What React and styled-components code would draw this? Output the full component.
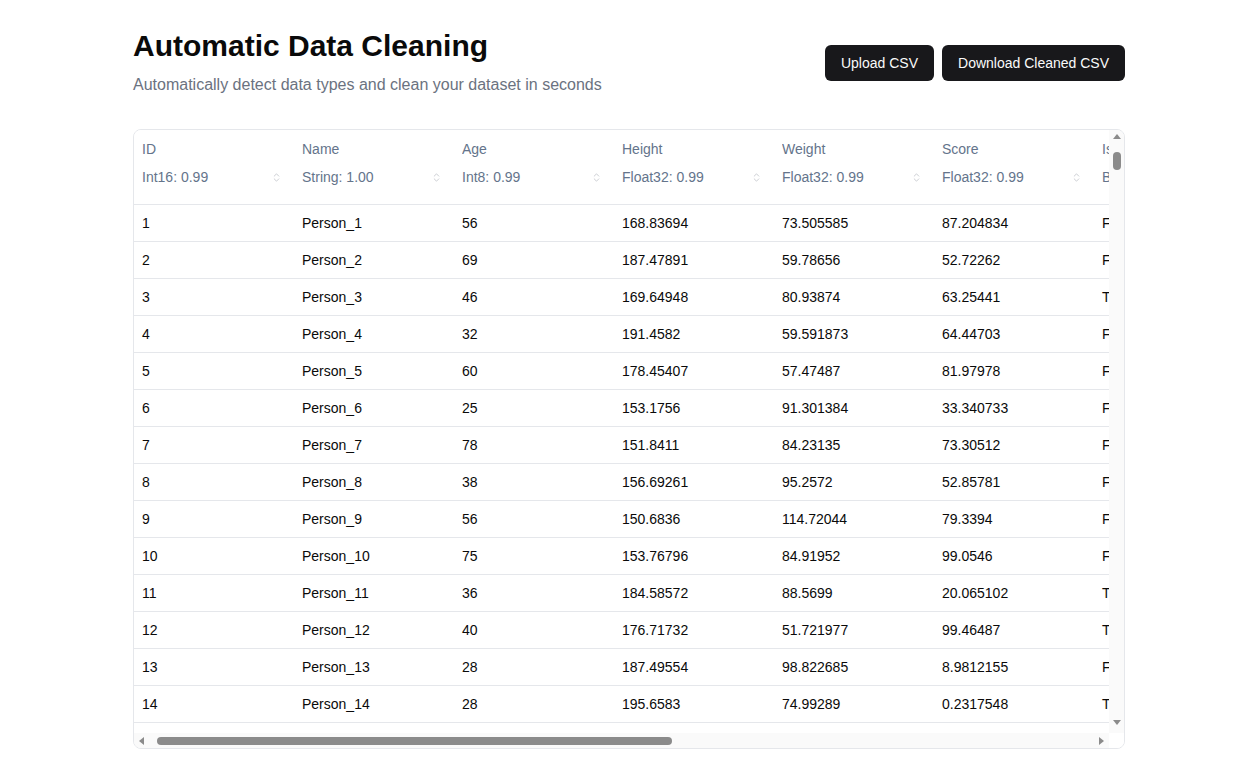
import React from "react";
import styled, { createGlobalStyle, css } from "styled-components";
import { ChevronsUpDown } from "lucide-react";

const GlobalStyle = createGlobalStyle`
  *, *::before, *::after {
    box-sizing: border-box;
  }
  body {
    margin: 0;
    background: #ffffff;
    font-family: "Liberation Sans", Arial, sans-serif;
    color: #0a0a0a;
  }
`;

const Page = styled.main`
  max-width: 992px;
  margin: 0 auto;
  padding-top: 28px;
`;

const Header = styled.header`
  display: flex;
  align-items: center;
  justify-content: space-between;
`;

const Title = styled.h1`
  margin: 0;
  font-size: 30px;
  line-height: 36px;
  font-weight: 700;
  color: #0a0a0a;
`;

const Subtitle = styled.p`
  margin: 9px 0 0;
  font-size: 16px;
  line-height: 24px;
  color: #6b7280;
`;

const Actions = styled.div`
  display: flex;
  gap: 8px;
`;

const Button = styled.button`
  height: 36px;
  padding: 0 16px;
  border: none;
  border-radius: 6px;
  background: #18181b;
  color: #fafafa;
  font-family: inherit;
  font-size: 14px;
  cursor: pointer;
`;

// table card with its own drawn scrollbars
const Card = styled.section`
  margin-top: 32px;
  border: 1px solid #e5e7eb;
  border-radius: 8px;
  overflow: hidden;
  display: grid;
  grid-template-columns: 1fr 15px;
  grid-template-rows: 603px 15px;
`;

const Viewport = styled.div`
  overflow: hidden;
`;

const BAR_BG = "#fafafa";
const THUMB = "#8b8b8b";

const VBar = styled.div`
  display: flex;
  flex-direction: column;
  align-items: center;
  background: ${BAR_BG};
`;

const HBar = styled.div`
  display: flex;
  align-items: center;
  background: ${BAR_BG};
`;

const Corner = styled.div`
  background: #ffffff;
`;

const ArrowBox = styled.div`
  width: 15px;
  height: 15px;
  flex-shrink: 0;
  display: flex;
  align-items: center;
  justify-content: center;
`;

const arrows = {
  up: css`
    border-left: 4px solid transparent;
    border-right: 4px solid transparent;
    border-bottom: 5px solid ${THUMB};
    margin-top: -2px;
  `,
  down: css`
    border-left: 4px solid transparent;
    border-right: 4px solid transparent;
    border-top: 5px solid ${THUMB};
    margin-top: -6px;
  `,
  left: css`
    border-top: 4px solid transparent;
    border-bottom: 4px solid transparent;
    border-right: 5px solid ${THUMB};
  `,
  right: css`
    border-top: 4px solid transparent;
    border-bottom: 4px solid transparent;
    border-left: 5px solid ${THUMB};
  `,
};

const Arrow = styled.span`
  width: 0;
  height: 0;
  ${(p) => arrows[p.$dir]}
`;

const VTrack = styled.div`
  flex: 1;
  padding-top: 7px;
`;

const HTrack = styled.div`
  flex: 1;
  padding-left: 8px;
  display: flex;
  align-items: center;
`;

const Thumb = styled.div`
  background: ${THUMB};
  border-radius: 4px;
  ${(p) => (p.$vertical ? "width: 8px;" : "height: 8px;")}
`;

const Table = styled.table`
  table-layout: fixed;
  width: ${(p) => p.$cols * 160}px;
  border-collapse: collapse;
  font-size: 14px;
`;

const Th = styled.th`
  background: #ffffff;
  width: 160px;
  padding: 9px 8px 13px;
  text-align: left;
  font-weight: 400;
  color: #64748b;
  border-bottom: 1px solid #e5e7eb;
  vertical-align: top;
`;

const ColName = styled.div`
  line-height: 20px;
  white-space: nowrap;
  overflow: hidden;
`;

const TypeSelect = styled.div`
  margin-top: 4px;
  height: 28px;
  display: flex;
  align-items: center;
  justify-content: space-between;
  padding-right: 4px;
  line-height: 20px;
  white-space: nowrap;
  overflow: hidden;
  color: #64748b;

  svg {
    flex-shrink: 0;
    color: #b4b8bf;
  }
`;

const Td = styled.td`
  height: 37px;
  padding: 0 8px;
  border-bottom: 1px solid #e5e7eb;
  white-space: nowrap;
  overflow: hidden;
  color: #0a0a0a;
`;

const columns = [
  { name: "ID", type: "Int16: 0.99" },
  { name: "Name", type: "String: 1.00" },
  { name: "Age", type: "Int8: 0.99" },
  { name: "Height", type: "Float32: 0.99" },
  { name: "Weight", type: "Float32: 0.99" },
  { name: "Score", type: "Float32: 0.99" },
  { name: "IsActive", type: "Boolean: 1.00" },
  { name: "JoinDate", type: "Datetime: 0.98" },
  { name: "City", type: "Category: 1.00" },
  { name: "Salary", type: "Float32: 0.99" },
  { name: "Rating", type: "Int8: 0.99" },
];

const firstRows = [
  ["56", "168.83694", "73.505585", "87.204834", "False"],
  ["69", "187.47891", "59.78656", "52.72262", "False"],
  ["46", "169.64948", "80.93874", "63.25441", "True"],
  ["32", "191.4582", "59.591873", "64.44703", "False"],
  ["60", "178.45407", "57.47487", "81.97978", "False"],
  ["25", "153.1756", "91.301384", "33.340733", "False"],
  ["78", "151.8411", "84.23135", "73.30512", "False"],
  ["38", "156.69261", "95.2572", "52.85781", "False"],
  ["56", "150.6836", "114.72044", "79.3394", "False"],
  ["75", "153.76796", "84.91952", "99.0546", "False"],
  ["36", "184.58572", "88.5699", "20.065102", "True"],
  ["40", "176.71732", "51.721977", "99.46487", "True"],
  ["28", "187.49554", "98.822685", "8.9812155", "False"],
  ["28", "195.6583", "74.99289", "0.2317548", "True"],
];

const cities = ["Berlin", "Paris", "Madrid", "Rome", "Vienna", "Oslo"];

let seed = 42;
const rand = () => {
  seed = (seed * 16807) % 2147483647;
  return (seed - 1) / 2147483646;
};

// only the first rows fit in the viewport, render a few extra
const rows = Array.from({ length: 16 }, (_, i) => {
  const id = i + 1;
  const base = firstRows[i] || [
    String(18 + Math.floor(rand() * 62)),
    (150 + rand() * 50).toFixed(5),
    (50 + rand() * 65).toFixed(5),
    (rand() * 100).toFixed(5),
    rand() > 0.7 ? "True" : "False",
  ];
  const month = String(1 + (i % 12)).padStart(2, "0");
  const day = String(1 + (i % 28)).padStart(2, "0");
  return [
    String(id),
    `Person_${id}`,
    ...base,
    `2021-${month}-${day}`,
    cities[i % cities.length],
    (30000 + ((i * 7919) % 70000)).toFixed(2),
    String(1 + (i % 5)),
  ];
});

const App = () => {
  return (
    <>
      <GlobalStyle />
      <Page>
        <Header>
          <div>
            <Title>Automatic Data Cleaning</Title>
            <Subtitle>
              Automatically detect data types and clean your dataset in seconds
            </Subtitle>
          </div>
          <Actions>
            <Button>Upload CSV</Button>
            <Button>Download Cleaned CSV</Button>
          </Actions>
        </Header>

        <Card>
          <Viewport>
            <Table $cols={columns.length}>
              <thead>
                <tr>
                  {columns.map((col) => (
                    <Th key={col.name}>
                      <ColName>{col.name}</ColName>
                      <TypeSelect>
                        <span>{col.type}</span>
                        <ChevronsUpDown size={11} strokeWidth={1.5} />
                      </TypeSelect>
                    </Th>
                  ))}
                </tr>
              </thead>
              <tbody>
                {rows.map((row) => (
                  <tr key={row[0]}>
                    {row.map((cell, j) => (
                      <Td key={j}>{cell}</Td>
                    ))}
                  </tr>
                ))}
              </tbody>
            </Table>
          </Viewport>

          <VBar>
            <ArrowBox>
              <Arrow $dir="up" />
            </ArrowBox>
            <VTrack>
              <Thumb $vertical style={{ height: 18 }} />
            </VTrack>
            <ArrowBox>
              <Arrow $dir="down" />
            </ArrowBox>
          </VBar>

          <HBar>
            <ArrowBox>
              <Arrow $dir="left" />
            </ArrowBox>
            <HTrack>
              <Thumb style={{ width: 515 }} />
            </HTrack>
            <ArrowBox>
              <Arrow $dir="right" />
            </ArrowBox>
          </HBar>
          <Corner />
        </Card>
      </Page>
    </>
  );
};

export default App;
